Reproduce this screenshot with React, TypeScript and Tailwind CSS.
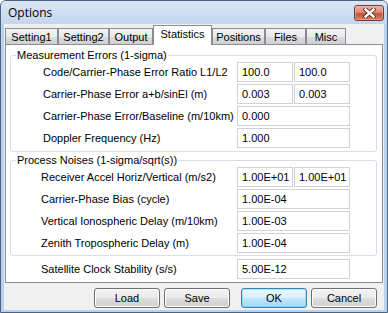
import React from "react";

const tabs = [
  { name: "Setting1", w: "w-[53px]" },
  { name: "Setting2", w: "w-[51px]" },
  { name: "Output", w: "w-[44px]" },
  { name: "Statistics", w: "w-[59px]", active: true },
  { name: "Positions", w: "w-[53px]" },
  { name: "Files", w: "w-[41px]" },
  { name: "Misc", w: "w-[40px]" },
];

function Input({ v, wide }: { v: string; wide?: boolean }) {
  return (
    <div
      className={`${wide ? "w-[113px]" : "w-[56px]"} h-[20px] border border-[#cfd2d7] bg-white flex items-center pl-[4px] pt-[1px] text-black`}
    >
      {v}
    </div>
  );
}

function Row({ label, vals, pl }: { label: string; vals: string[]; pl: string }) {
  return (
    <div className="grid grid-cols-[226px_1fr] h-[20px] items-center">
      <div className={`${pl} whitespace-nowrap`}>{label}</div>
      <div className="flex gap-[1px]">
        {vals.length === 1 ? <Input v={vals[0]} wide /> : vals.map((v, i) => <Input key={i} v={v} />)}
      </div>
    </div>
  );
}

function Btn({ label, def }: { label: string; def?: boolean }) {
  return (
    <div
      className={`w-[66px] h-[20px] rounded-[3px] border flex items-center justify-center text-black ${
        def
          ? "border-[#3c7fb1] bg-[linear-gradient(#eaf6fd_0%,#d9f0fc_50%,#bee6fd_51%,#a7d9f5_100%)] shadow-[inset_0_0_0_1px_#48cfff66]"
          : "border-[#707070] bg-[linear-gradient(#f2f2f2_0%,#ebebeb_50%,#dddddd_51%,#cfcfcf_100%)] shadow-[inset_0_0_0_1px_#fcfcfc]"
      }`}
    >
      {label}
    </div>
  );
}

export default function App() {
  return (
    <div className="w-[388px] h-[313px] flex flex-col border border-[#4b6383] rounded-t-[6px] bg-[#bcd2ec] overflow-hidden font-['Liberation_Sans',Arial,sans-serif] text-[11px] text-black">
      {/* title bar */}
      <div className="h-[23px] flex items-start bg-[linear-gradient(#d9e6f6,#c3d6ee)]">
        <div className="pl-[7px] pt-[4px] text-[12px] font-['Open_Sans',sans-serif] leading-[15px]">Options</div>
        <div className="ml-auto mr-[3px] mt-[4px] w-[30px] h-[16px] rounded-[3px] border border-[#7a3a32] bg-[linear-gradient(#eab0a4_0%,#d98a7c_45%,#c8503c_55%,#d88466_100%)] flex items-center justify-center shadow-[inset_0_0_0_1px_#f1c3b866]">
          <svg width="13" height="10" viewBox="0 0 13 10">
            <path d="M2.5 1.5 L10.5 8.5 M10.5 1.5 L2.5 8.5" stroke="#5a2a24" strokeWidth="4.2" strokeLinecap="square" />
            <path d="M2.5 1.5 L10.5 8.5 M10.5 1.5 L2.5 8.5" stroke="#ffffff" strokeWidth="2.4" strokeLinecap="square" />
          </svg>
        </div>
      </div>
      {/* client */}
      <div className="mx-[3px] mb-[2px] flex-1 bg-[#f0f0f0] flex flex-col">
        <div className="pt-[1px] pl-[1px] flex items-end h-[20px]">
          {tabs.map((t) =>
            t.active ? (
              <div
                key={t.name}
                className={`${t.w} h-[20px] mb-[-1px] relative z-10 bg-white border border-b-0 border-[#898c95] flex items-start justify-center pt-[2px] leading-[13px]`}
              >
                {t.name}
              </div>
            ) : (
              <div
                key={t.name}
                className={`${t.w} h-[16px] border border-b-0 border-[#898c95] bg-[linear-gradient(#f2f2f2_0%,#ebebeb_50%,#dddddd_51%,#cfcfcf_100%)] flex items-center justify-center leading-[13px] pt-[1px]`}
              >
                {t.name}
              </div>
            )
          )}
        </div>
        <div className="ml-[1px] w-[378px] h-[239px] border border-[#898c95] bg-white pt-[4px] pl-[4px]">
          <fieldset className="w-[367px] border border-[#d5dfe5] rounded-[3px] pb-[3px]">
            <legend className="ml-[5px] px-[1px] leading-[13px]">Measurement Errors (1-sigma)</legend>
            <div className="flex flex-col gap-[2px]">
              <Row pl="pl-[32px]" label="Code/Carrier-Phase Error Ratio L1/L2" vals={["100.0", "100.0"]} />
              <Row pl="pl-[32px]" label="Carrier-Phase Error a+b/sinEl (m)" vals={["0.003", "0.003"]} />
              <Row pl="pl-[32px]" label="Carrier-Phase Error/Baseline (m/10km)" vals={["0.000"]} />
              <Row pl="pl-[32px]" label="Doppler Frequency (Hz)" vals={["1.000"]} />
            </div>
          </fieldset>
          <fieldset className="mt-[2px] w-[367px] border border-[#d5dfe5] rounded-[3px] pb-[2px]">
            <legend className="ml-[5px] px-[1px] leading-[13px]">Process Noises (1-sigma/sqrt(s))</legend>
            <div className="flex flex-col gap-[2px]">
              <Row pl="pl-[30px]" label="Receiver Accel Horiz/Vertical (m/s2)" vals={["1.00E+01", "1.00E+01"]} />
              <Row pl="pl-[30px]" label="Carrier-Phase Bias (cycle)" vals={["1.00E-04"]} />
              <Row pl="pl-[30px]" label="Vertical Ionospheric Delay (m/10km)" vals={["1.00E-03"]} />
              <Row pl="pl-[30px]" label="Zenith Tropospheric Delay (m)" vals={["1.00E-04"]} />
            </div>
          </fieldset>
          <div className="mt-[3px] pl-[1px]">
            <Row pl="pl-[30px]" label="Satellite Clock Stability (s/s)" vals={["5.00E-12"]} />
          </div>
        </div>
        <div className="mt-[5px] flex pl-[90px]">
          <Btn label="Load" />
          <div className="ml-[4px]"><Btn label="Save" /></div>
          <div className="ml-[11px]"><Btn label="OK" def /></div>
          <div className="ml-[4px]"><Btn label="Cancel" /></div>
        </div>
      </div>
    </div>
  );
}
